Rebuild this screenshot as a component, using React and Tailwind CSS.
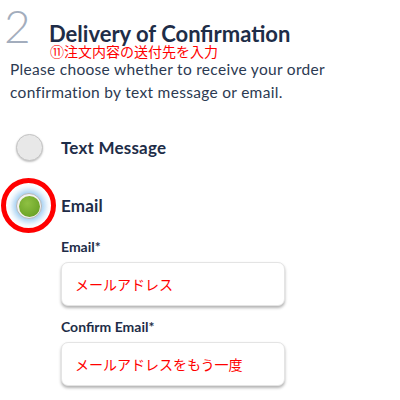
import React from 'react';

function Radio({ checked }) {
  if (checked) {
    return (
      <div className="relative w-[26px] h-[26px] shrink-0">
        <div className="w-[26px] h-[26px] rounded-full bg-[#f2f2f2] border border-[#b8b8b8] shadow-[0_0_6px_3px_rgba(110,180,235,0.7)] flex items-center justify-center">
          <div className="w-[21px] h-[21px] rounded-full bg-[radial-gradient(circle_at_40%_35%,#8fc043,#5f9a1e)]" />
        </div>
        <div className="absolute -left-[15px] -top-[15px] w-[55px] h-[55px] rounded-full border-[5px] border-[#ff0000]" />
      </div>
    );
  }
  return (
    <div className="w-[27px] h-[27px] shrink-0 rounded-full bg-[#e8e8e8] border border-[#c4c4c4] shadow-[0_1px_2px_rgba(0,0,0,0.25)]" />
  );
}

function Field({ label, placeholder }) {
  return (
    <div>
      <div className="text-[14px] font-bold text-[#1e2d48] leading-[16px]">{label}</div>
      <div className="mt-[7px] w-[224px] h-[44px] rounded-[7px] bg-white border border-[#e4e4e4] shadow-[0_2px_3px_rgba(0,0,0,0.3)] flex items-center px-[13px]">
        <span className="text-[14px] text-[#ff0000]" style={{ fontFamily: '"Noto Sans CJK JP", sans-serif' }}>{placeholder}</span>
      </div>
    </div>
  );
}

export default function App() {
  return (
    <div className="w-[400px] h-[400px] bg-white overflow-hidden relative" style={{ fontFamily: 'Lato, "Noto Sans CJK JP", sans-serif' }}>
      <div className="flex items-end pt-[6px]">
        <div className="w-[49px] pl-[4px] text-[46px] font-light leading-[40px] text-[#a3adbd]">2</div>
        <div className="text-[22px] font-bold text-[#1e2d48] leading-[22px] mb-[1px]">Delivery of Confirmation</div>
      </div>
      <div className="pl-[50px] pt-[1px] text-[14px] leading-[8px] text-[#ff0000]" style={{ fontFamily: '"Noto Sans CJK JP", sans-serif' }}>⑪注文内容の送付先を入力</div>
      <p className="w-[345px] px-[10px] mt-[3px] text-[15.5px] tracking-[0.3px] leading-[23px] text-[#2c3a52]">
        Please choose whether to receive your order confirmation by text message or email.
      </p>
      <div className="mt-[30px] pl-[16px] flex items-center gap-[18px]">
        <Radio />
        <span className="text-[17px] tracking-[0.2px] font-bold text-[#1e2d48]">Text Message</span>
      </div>
      <div className="mt-[32px] pl-[16px] flex items-center gap-[19px]">
        <Radio checked />
        <span className="text-[17px] tracking-[0.2px] font-bold text-[#1e2d48]">Email</span>
      </div>
      <div className="pl-[61px] mt-[20px] flex flex-col gap-[13px]">
        <Field label="Email*" placeholder="メールアドレス" />
        <Field label="Confirm Email*" placeholder="メールアドレスをもう一度" />
      </div>
    </div>
  );
}
